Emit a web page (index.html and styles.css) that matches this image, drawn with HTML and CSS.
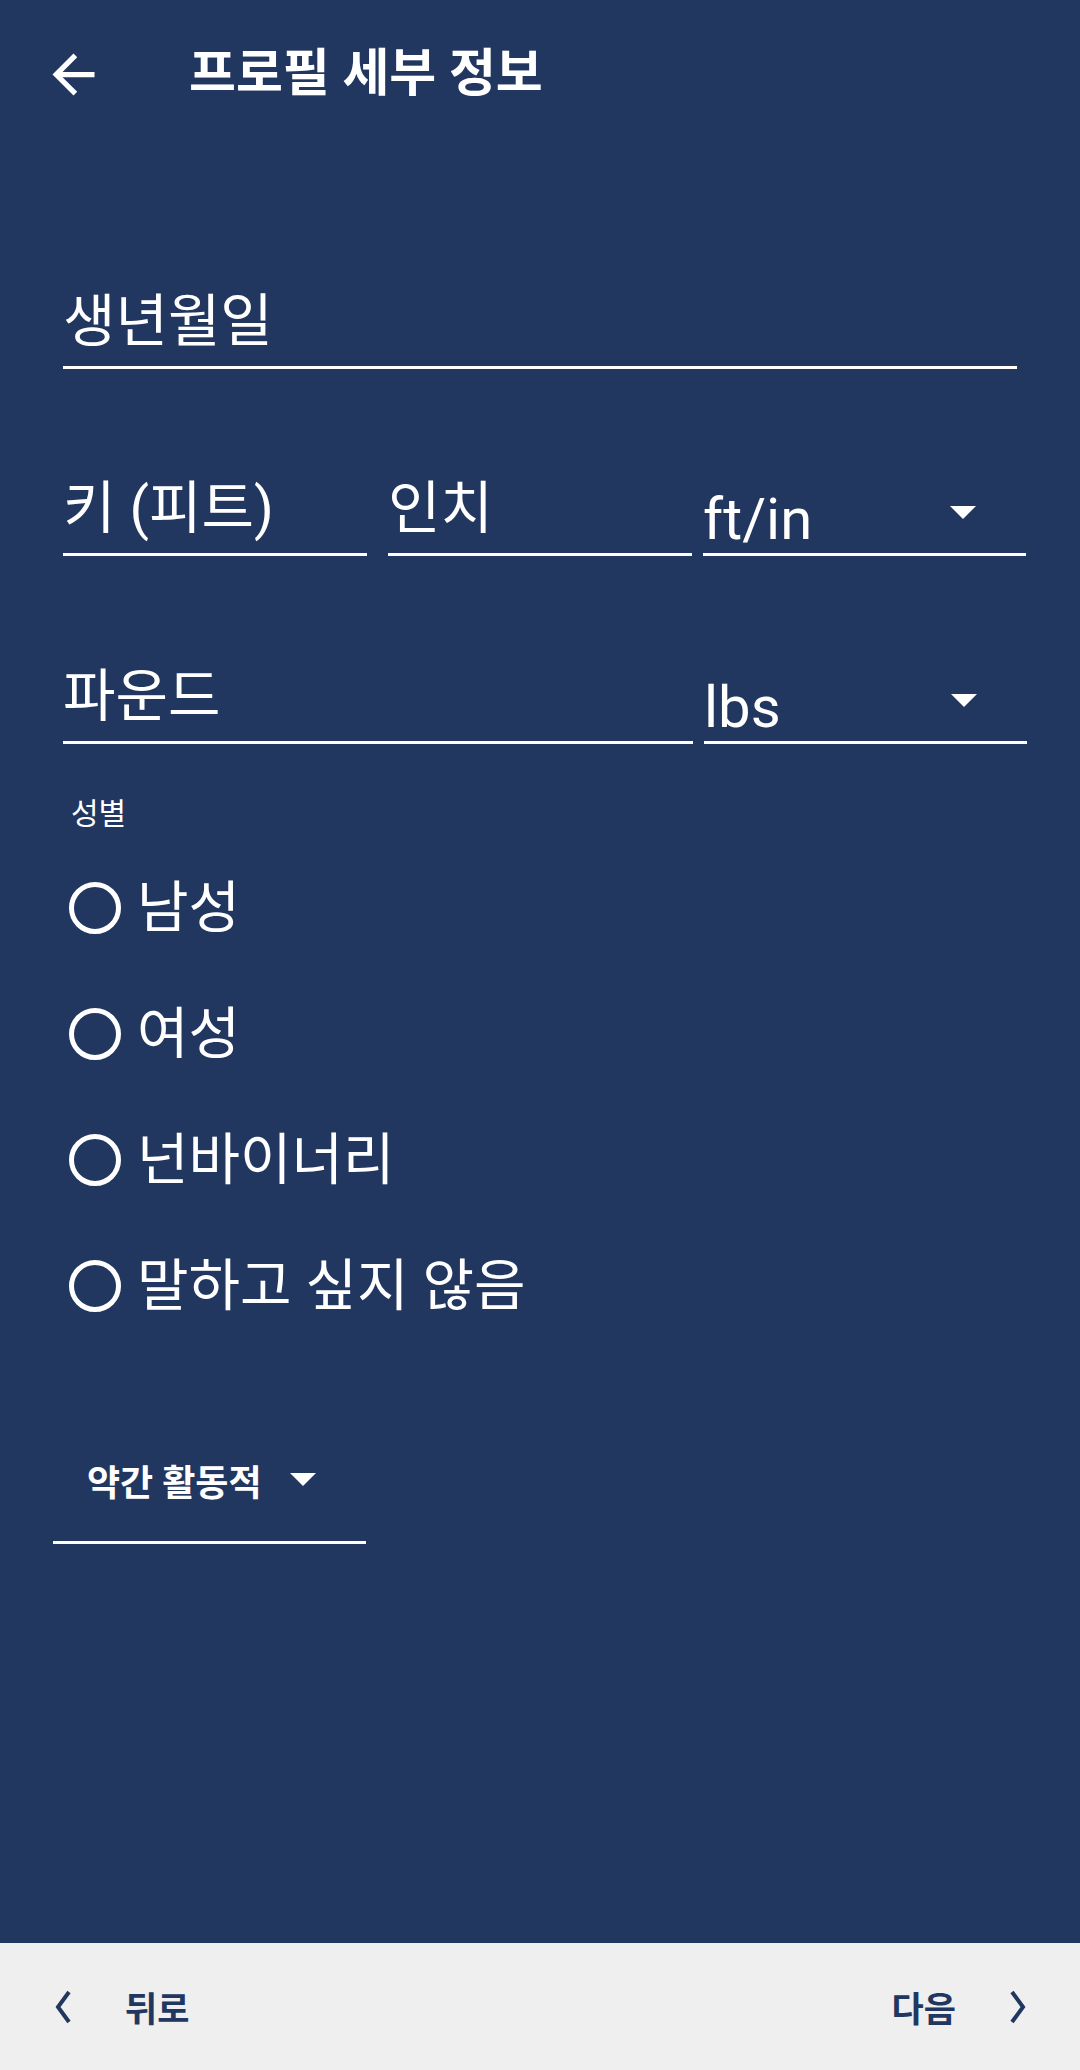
FILE: index.html
```html
<!DOCTYPE html>
<html lang="ko">
<head>
<meta charset="utf-8">
<title>프로필 세부 정보</title>
<link rel="stylesheet" href="styles.css">
</head>
<body>
<div class="page">
  <header class="header">
    <svg class="back" width="63" height="63" viewBox="0 0 24 24"><path d="M20 11H7.83l5.59-5.59L12 4l-8 8 8 8 1.41-1.41L7.83 13H20v-2z" fill="#fff"/></svg>
    <h1 class="title">프로필 세부 정보</h1>
  </header>
  <main class="form">
    <div class="field field-full"><span>생년월일</span></div>
    <div class="row row-height">
      <div class="field f-ft"><span>키 (피트)</span></div>
      <div class="field f-in"><span>인치</span></div>
      <div class="field select"><span class="latin">ft/in</span><i class="caret"></i></div>
    </div>
    <div class="row row-weight">
      <div class="field f-lb"><span>파운드</span></div>
      <div class="field select"><span class="latin">lbs</span><i class="caret"></i></div>
    </div>
    <div class="gender-label">성별</div>
    <ul class="radios">
      <li><span class="radio"></span>남성</li>
      <li><span class="radio"></span>여성</li>
      <li><span class="radio"></span>넌바이너리</li>
      <li><span class="radio"></span>말하고 싶지 않음</li>
    </ul>
    <div class="activity"><span>약간 활동적</span><i class="caret small"></i></div>
  </main>
  <footer class="footer">
    <div class="nav"><svg width="20" height="34" viewBox="0 0 20 34"><path d="M16 2 L5 17 L16 32" fill="none" stroke="#21375f" stroke-width="4"/></svg><span class="nav-text back-text">뒤로</span></div>
    <div class="nav"><span class="nav-text next-text">다음</span><svg width="20" height="34" viewBox="0 0 20 34"><path d="M4 2 L15 17 L4 32" fill="none" stroke="#21375f" stroke-width="4"/></svg></div>
  </footer>
</div>
</body>
</html>
```
FILE: styles.css
```css
html, body {
  margin: 0;
  padding: 0;
}
body {
  background: #21375f;
  font-family: Roboto, "Noto Sans CJK KR", sans-serif;
  color: #fff;
}
.page {
  width: 1080px;
  height: 2070px;
  display: flex;
  flex-direction: column;
}
.header {
  height: 148px;
  display: flex;
  align-items: center;
  padding-left: 42px;
  box-sizing: border-box;
}
.back {
  display: block;
}
.title {
  margin: 0 0 0 84px;
  font-size: 51px;
  font-weight: 700;
  line-height: 1;
  padding-bottom: 2px;
}
.form {
  flex: 1;
  padding: 0 53px 0 63px;
}
.field {
  border-bottom: 3px solid #fff;
  font-size: 57px;
  line-height: 60px;
  padding-bottom: 14px;
  display: flex;
  align-items: flex-end;
  box-sizing: border-box;
}
.field-full {
  width: 954px;
  margin-top: 144px;
}
.row {
  display: flex;
  gap: 11px;
}
.row-height {
  margin-top: 110px;
}
.row-weight {
  margin-top: 111px;
}
.f-ft, .f-in {
  width: 304px;
}
.f-in {
  margin-left: 10px;
}
.f-lb {
  width: 630px;
}
.select {
  width: 323px;
  justify-content: space-between;
  padding-bottom: 4px;
}
.latin {
  font-size: 58px;
}
.caret {
  width: 0;
  height: 0;
  border-left: 13px solid transparent;
  border-right: 13px solid transparent;
  border-top: 13px solid #fff;
  margin: 0 50px 30px 0;
}
.gender-label {
  margin: 52px 0 0 8px;
  font-size: 30px;
  line-height: 36px;
}
.radios {
  list-style: none;
  margin: 46px 0 0 6px;
  padding: 0;
  display: flex;
  flex-direction: column;
  gap: 66px;
}
.radios li {
  display: flex;
  align-items: center;
  font-size: 56px;
  line-height: 60px;
  gap: 16px;
}
.radio {
  width: 42px;
  height: 42px;
  border: 5px solid #fff;
  border-radius: 50%;
  box-sizing: content-box;
}
.activity {
  margin: 116px 0 0 -10px;
  width: 313px;
  height: 112px;
  border-bottom: 3px solid #fff;
  box-sizing: border-box;
  display: flex;
  align-items: center;
  padding: 0 0 14px 34px;
  font-size: 36px;
  font-weight: 700;
}
.caret.small {
  margin: 0 0 0 28px;
}
.footer {
  height: 127px;
  background: #efefef;
  display: flex;
  justify-content: space-between;
  align-items: center;
  padding: 0 52px 0 53px;
}
.nav {
  display: flex;
  align-items: center;
  color: #21375f;
}
.nav svg {
  display: block;
}
.nav-text {
  font-size: 35px;
  font-weight: 700;
}
.back-text {
  margin-left: 52px;
}
.next-text {
  margin-right: 52px;
}
```
